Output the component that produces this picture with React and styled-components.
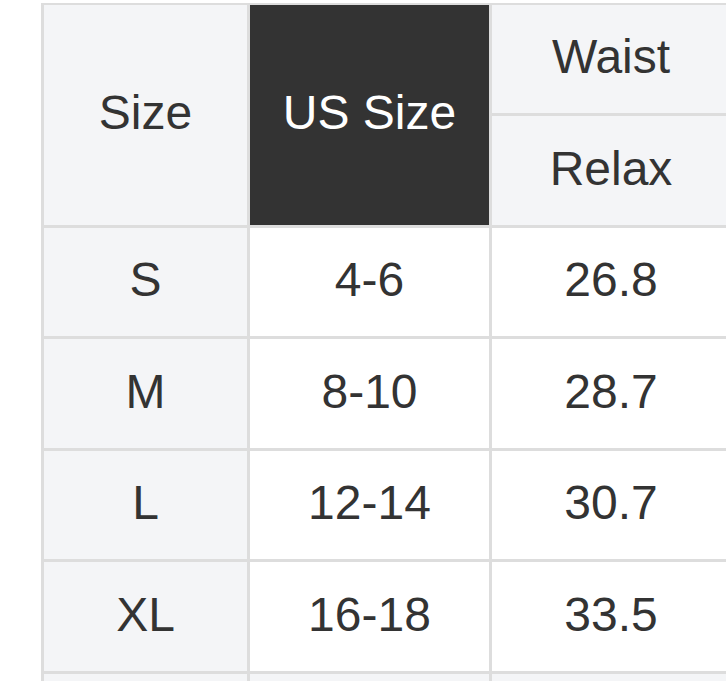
import React from 'react'
import styled, { createGlobalStyle } from 'styled-components'

const sizes = [
    { size: 'S', us: '4-6', waist: '26.8', h: 108 },
    { size: 'M', us: '8-10', waist: '28.7', h: 109 },
    { size: 'L', us: '12-14', waist: '30.7', h: 108 },
    { size: 'XL', us: '16-18', waist: '33.5', h: 109 },
]

const GlobalStyle = createGlobalStyle`
    html, body {
        margin: 0;
        padding: 0;
        background: #ffffff;
        overflow: hidden;
    }
    body {
        font-family: "Liberation Sans", Arial, sans-serif;
    }
`

const Wrapper = styled.div`
    padding: 3px 0 0 41px;
    width: 726px;
    height: 681px;
    box-sizing: border-box;
    overflow: hidden;
`

const Table = styled.table`
    width: 692px;
    border-collapse: separate;
    border-spacing: 0;
    border-top: 2px solid #dddddd;
    border-left: 3px solid #dddddd;
    table-layout: fixed;
    font-size: 48px;
    color: #333333;
`

const Cell = styled.td`
    box-sizing: content-box;
    padding: 0 0 4px;
    text-align: center;
    vertical-align: middle;
    border-right: 3px solid #dddddd;
    border-bottom: 3px solid #dddddd;
    background: ${({ $shade }) => ($shade === 'dark' ? '#333333' : $shade === 'light' ? '#f4f5f7' : '#ffffff')};
    color: ${({ $shade }) => ($shade === 'dark' ? '#ffffff' : '#333333')};
    white-space: nowrap;
    line-height: 1;
`

const Row = styled.tr`
    height: ${({ $h }) => $h}px;
`

const App = () => (
    <>
        <GlobalStyle />
        <Wrapper>
            <Table>
                <colgroup>
                    <col style={{ width: 206 }} />
                    <col style={{ width: 242 }} />
                    <col style={{ width: 241 }} />
                </colgroup>
                <tbody>
                    <Row $h={111}>
                        <Cell $shade="light" rowSpan={2}>Size</Cell>
                        <Cell $shade="dark" rowSpan={2}>US Size</Cell>
                        <Cell $shade="light">Waist</Cell>
                    </Row>
                    <Row $h={112}>
                        <Cell $shade="light">Relax</Cell>
                    </Row>
                    {sizes.map(({ size, us, waist, h }) => (
                        <Row $h={h + 3} key={size}>
                            <Cell $shade="light">{size}</Cell>
                            <Cell>{us}</Cell>
                            <Cell>{waist}</Cell>
                        </Row>
                    ))}
                    <Row $h={111}>
                        <Cell $shade="light" />
                        <Cell $shade="light" />
                        <Cell $shade="light" />
                    </Row>
                </tbody>
            </Table>
        </Wrapper>
    </>
)

export default App
